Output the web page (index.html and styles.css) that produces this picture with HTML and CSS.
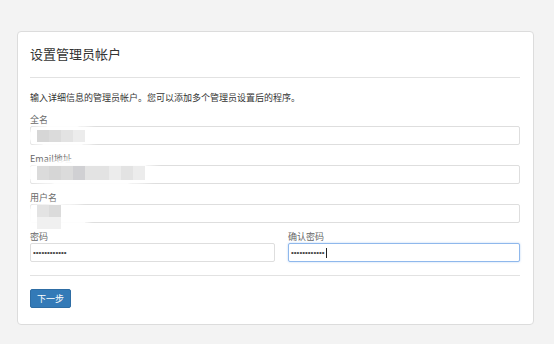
FILE: index.html
```html
<!DOCTYPE html>
<html lang="zh-CN">
  <head>
    <meta charset="UTF-8" />
    <meta name="viewport" content="width=device-width, initial-scale=1.0" />
    <title>设置管理员帐户</title>
    <link rel="stylesheet" href="styles.css">
  </head>
  <body>
    <div class="panel">
      <h2 class="panel-title">设置管理员帐户</h2>
      <hr class="rule" />
      <p class="intro">输入详细信息的管理员帐户。您可以添加多个管理员设置后的程序。</p>
      <form class="admin-form" id="admin-form">
        <div class="field">
          <label for="full-name">全名</label>
          <input type="text" id="full-name" />
        </div>
        <div class="field">
          <label for="email">Email地址</label>
          <input type="text" id="email" />
        </div>
        <div class="field">
          <label for="username">用户名</label>
          <input type="text" id="username" />
        </div>
        <div class="field-row">
          <div class="field">
            <label for="password">密码</label>
            <input type="password" id="password" value="abcdefghijkl" />
          </div>
          <div class="field">
            <label for="password2">确认密码</label>
            <div class="input-wrap">
              <input class="is-focus" type="password" id="password2" value="abcdefghijkl" />
              <span class="caret"></span>
            </div>
          </div>
        </div>
        <hr class="rule" />
        <button class="btn-next" type="submit">下一步</button>
      </form>

      <!-- privacy blur over the filled values -->
      <div class="redact redact-name">
        <span class="cell c1"></span><span class="cell c2"></span><span class="cell c3"></span><span class="cell c4"></span>
      </div>
      <div class="redact redact-email">
        <span class="cell c2"></span><span class="cell c1"></span><span class="cell c2"></span><span class="cell c5"></span><span class="cell c3"></span><span class="cell c3"></span><span class="cell c4"></span><span class="cell c3"></span><span class="cell c4"></span>
      </div>
      <div class="redact redact-user">
        <span class="cell c3"></span><span class="cell c2"></span>
        <span class="cell c6"></span><span class="cell c6"></span>
      </div>
    </div>
  </body>
</html>
```

FILE: styles.css
```css
* {
  margin: 0;
  padding: 0;
  box-sizing: border-box;
}

body {
  font-family: "Noto Sans CJK SC", "Liberation Sans", sans-serif;
  background: #f3f3f3;
  color: #333;
  padding-top: 31px;
}

.panel {
  position: relative;
  width: 517px;
  margin-left: 17px;
  background: #fff;
  border: 1px solid #dcdcdc;
  border-radius: 4px;
  padding: 0 13px 16px 12px;
}

.panel-title {
  font-size: 13px;
  font-weight: normal;
  line-height: 20px;
  padding-top: 12px;
  color: #333;
}

.rule {
  border: 0;
  border-top: 1px solid #e2e2e2;
  margin-top: 13px;
}

.intro {
  font-size: 9px;
  line-height: 12px;
  margin-top: 14px;
  color: #333;
}

.field {
  margin-top: 8px;
}

.admin-form > .field:first-child {
  margin-top: 10px;
}

.field label {
  display: block;
  font-size: 9px;
  line-height: 12px;
  color: #666;
}

.field input {
  display: block;
  width: 100%;
  height: 19px;
  border: 1px solid #dedede;
  border-radius: 2px;
  padding: 0 2px;
  font-size: 8px;
  color: #444;
  background: #fff;
  outline: none;
}

.field input.is-focus {
  border-color: #8fb8ec;
  box-shadow: 0 0 2px rgba(102, 160, 233, 0.5);
}

.field-row {
  display: grid;
  grid-template-columns: 245px 1fr;
  column-gap: 13px;
}

.input-wrap {
  position: relative;
}

.caret {
  position: absolute;
  left: 38px;
  top: 5px;
  width: 1px;
  height: 10px;
  background: #222;
}

.btn-next {
  display: block;
  margin-top: 13px;
  width: 41px;
  height: 19px;
  background: #337ab7;
  color: #fff;
  border: 1px solid #2e6da4;
  border-radius: 2px;
  font-family: inherit;
  font-size: 9px;
  cursor: pointer;
}

/* blurred redaction blobs */
.redact {
  position: absolute;
  display: grid;
  grid-auto-rows: 12px;
  align-content: center;
  background: rgba(255, 255, 255, 0.94);
  border-radius: 50%;
  box-shadow: 0 0 4px 2px rgba(255, 255, 255, 0.85);
}

.redact-name {
  left: 10px;
  top: 93px;
  width: 69px;
  height: 22px;
  padding-left: 9px;
  grid-template-columns: repeat(4, 12px);
}

.redact-email {
  left: 4px;
  top: 128px;
  width: 138px;
  height: 26px;
  padding-left: 15px;
  grid-auto-rows: 14px;
  grid-template-columns: repeat(9, 12px);
}

.redact-user {
  left: 4px;
  top: 172px;
  width: 68px;
  height: 25px;
  padding-left: 15px;
  grid-template-columns: 12px 12px;
}

.cell {
  display: block;
}

.c1 { background: #d6d6d6; }
.c2 { background: #dbdbdb; }
.c3 { background: #e3e3e3; }
.c4 { background: #ececec; }
.c5 { background: #d0d0d3; }
.c6 { background: #f0f0f0; }
```
